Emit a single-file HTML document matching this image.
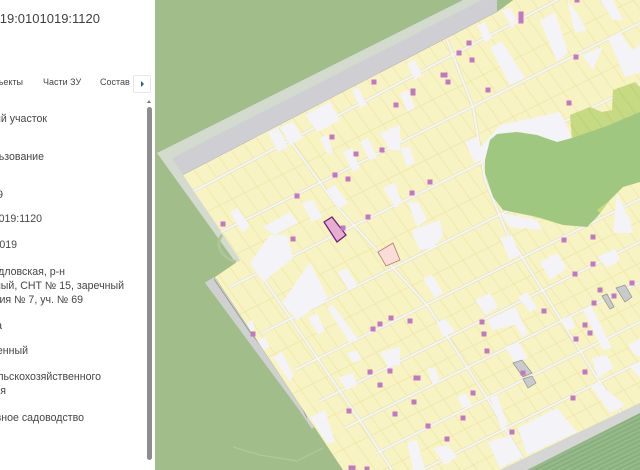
<!DOCTYPE html>
<html lang="ru"><head><meta charset="utf-8"><title>Участок</title>
<style>
html,body{margin:0;padding:0;width:640px;height:470px;overflow:hidden;background:#fff}
#map{position:absolute;left:155px;top:0;width:485px;height:470px;overflow:hidden}
#map svg{display:block;filter:blur(.35px)}
#panel{position:absolute;left:0;top:0;width:155px;height:470px;background:#fff;overflow:hidden;font-family:"Liberation Sans",sans-serif;color:#454545;font-size:10.6px}
#panel span{position:absolute;white-space:nowrap;line-height:14px}
#sb{position:absolute;left:147px;top:107px;width:5px;height:353px;border-radius:3px;background:#8d8d8d}
#up{position:absolute;left:147px;top:100px;width:0;height:0;border-left:2.5px solid transparent;border-right:2.5px solid transparent;border-bottom:3px solid #777}
#btn{position:absolute;left:133px;top:75px;width:18px;height:18px;box-sizing:border-box;border:1px solid #e4e8ee;border-radius:2px;background:#fff}
#btn:after{content:"";position:absolute;left:7px;top:5px;border-left:3px solid #2d5a86;border-top:3px solid transparent;border-bottom:3px solid transparent}
</style></head><body>
<div id="map">
<svg width="485" height="470" viewBox="155 0 485 470" xmlns="http://www.w3.org/2000/svg">
<defs>
<pattern id="pl" width="14" height="100" patternUnits="userSpaceOnUse" patternTransform="matrix(.895 -.446 .58 .81 4 0)"><rect width="14" height="100" fill="#f8f3c3"/><rect width=".9" height="100" fill="#efe8ab"/></pattern>
<pattern id="lg" width="12" height="100" patternUnits="userSpaceOnUse" patternTransform="matrix(.895 -.446 .58 .81 0 0)"><rect width="12" height="100" fill="#c6da84"/><rect width="1" height="100" fill="#b9d178"/></pattern>
<pattern id="st" width="4" height="4" patternUnits="userSpaceOnUse" patternTransform="rotate(-26)"><rect width="4" height="4" fill="#95b988"/><rect width="4" height="1.5" fill="#86ae7c"/></pattern>
<clipPath id="yc"><path d="M183 175L497 12L520 -5H640V403L500 470H343L215 277L240 260Z"/></clipPath>
</defs>
<rect x="155" y="0" width="485" height="470" fill="#a1bd8a"/>
<path d="M157 153L463 0H497V12L183 175L242 258L236 263Z" fill="#d3dace"/>
<path d="M172 158L490 -4L497 0V12L183 175Z" fill="#cfcfd3"/>
<path d="M183 175L497 12" stroke="#9c9c9c" stroke-width=".6" fill="none"/>
<path d="M207 283L214 279L313 428L307 418Z" fill="#cfd1d0" stroke="#cfd1d0" stroke-width="3"/>
<path d="M214 279L250 332L290 382L307 418" stroke="#8e8e8e" stroke-width=".7" fill="none"/>
<path d="M527 470L640 413V470Z" fill="url(#st)"/>
<path d="M500 470L640 403V413L527 470Z" fill="#d5d6d4"/>
<path d="M233 447L260 455L297 461L323 448" stroke="#b2c9a0" stroke-width="1.2" fill="none"/>
<path d="M222 235C214 245 222 258 236 262" stroke="#adc597" stroke-width="3" fill="none"/>
<path d="M183 175L497 12L520 -5H640V403L500 470H343L215 277L240 260Z" fill="url(#pl)"/>

<g clip-path="url(#yc)">
<g fill="none" stroke="#efe8ab" stroke-width=".9">
<path d="M150 240L640 -3M150 297L640 54M150 359L640 115M150 416L640 172M150 465L640 221M150 506L640 263M150 545L640 302M150 586L640 342M150 626L640 382"/>
</g>
<g fill="none" stroke="#dedcc4" stroke-width="3.2">
<path d="M190 193L563 -3M205 240L640 23M230 287L640 84M262 333L640 145M295 370L640 199M320 401L640 242M345 428L640 282M375 454L640 322M410 476L640 362"/>
<path d="M280 127L340 210L427 305L487 398L507 432L530 470M447 40L473 107L485 180L507 233L597 378L640 440M263 278L363 425L392 470"/>
</g>
<g fill="none" stroke="#f6f5ee" stroke-width="2.2">
<path d="M190 193L563 -3M205 240L640 23M230 287L640 84M262 333L640 145M295 370L640 199M320 401L640 242M345 428L640 282M375 454L640 322M410 476L640 362"/>
<path d="M280 127L340 210L427 305L487 398L507 432L530 470M447 40L473 107L485 180L507 233L597 378L640 440M263 278L363 425L392 470"/>
</g>

<g fill="#f4f3f7">
<path d="M305 115L330 102L340 120L318 132ZM280 127L293 122L303 138L290 145ZM268 132L278 128L288 147L278 152ZM352 90L358 87L367 105L360 108ZM380 133L400 125V150H390ZM320 138L327 135L333 152L328 155ZM343 152L352 148L360 168L353 172ZM360 142L368 138L377 157L370 160ZM327 190L335 185L348 203L340 208ZM383 188L393 183L400 203L395 207ZM302 203L313 200L322 217L312 222ZM230 212L238 208L250 227L242 232ZM263 227L290 212L298 223L275 235Z"/>
<path d="M250 263L270 235H287L293 258L263 282ZM282 303L310 262L328 298L297 320ZM338 272L347 268L357 285L348 290ZM308 318L317 313L325 330L318 335ZM327 308L333 305L357 338L350 343ZM247 323L252 320L255 328L250 332ZM257 340L265 337L270 347L263 350ZM273 357L282 352L293 375L290 382ZM310 417L325 410L335 442L327 443ZM338 378L353 373L357 385L347 390ZM347 353L357 350L362 360L353 363ZM380 352L400 347V365L388 367Z"/>
<path d="M412 235H443L433 248L420 250ZM423 278L432 275L443 293L435 298ZM475 300L490 293L498 307L485 315ZM487 320L515 307L528 333L523 337L515 325L493 330ZM540 262L557 253L567 268L550 280ZM500 238L512 235L520 255L510 260ZM598 257L615 249L620 260L607 268ZM505 347L518 342L528 358L515 363ZM518 297L527 292L537 308L530 312ZM437 323L445 318L455 332L443 337ZM427 368L435 367L440 382L433 385ZM457 397L465 393L472 405L463 408ZM490 398L497 395L508 425L502 430ZM518 428L557 408L577 432L527 455ZM488 442L510 435L522 457L500 468ZM433 448L448 445L457 457L445 465ZM407 442L417 440L425 470H413ZM592 358L607 355L613 368L598 378ZM590 385L598 383L625 405L610 413ZM583 310L592 307L612 348L603 350ZM562 318L572 317L575 328L567 330ZM628 345L640 338V357L635 355ZM630 367L640 363V378ZM390 348L398 355L400 363L390 367Z"/>
<path d="M490 47L502 42L525 78L510 85ZM540 20L555 12L568 52L557 62ZM502 10L510 8L518 22L512 28ZM582 55L603 47L593 70ZM608 38L620 33L632 50L640 45V73L625 77ZM390 127L402 140L390 150ZM400 93L408 90L415 108L407 112ZM407 63L415 60L422 75L415 80ZM477 25L485 22L492 38L485 42ZM400 148L410 147L415 163L407 167ZM465 142L477 137L482 160L475 163ZM390 187L395 183L402 203L395 208ZM408 203L418 202L427 220L417 227ZM413 230L440 220L443 235H413ZM617 193L630 220L633 233L613 233ZM567 0L577 13L587 30L575 33ZM600 0H613L623 20L613 20ZM500 213L537 220L543 230L510 227Z"/>
<path d="M478 150L500 125L560 112L572 138L557 142L485 165Z"/>
</g>
</g>

<path d="M570 115L590 107L602 112L612 110L613 90L635 82L640 87V125L572 140Z" fill="url(#lg)"/>
<path d="M485 160L490 140L497 134L517 132L537 135L557 142L572 138L607 126L640 112V182L623 187L610 200L597 217L587 227L563 225L537 217L503 210L493 197L485 173Z" fill="#a0c77f"/>
<path d="M597 210L610 200L600 213ZM530 215L543 219L538 218Z" fill="#c6da84"/>

<g fill="#c9cacb" stroke="#8f9490" stroke-width=".7">
<path d="M513 363L522 360L532 373L523 377ZM523 379L532 376L536 383L528 388ZM602 296L607 294L614 307L610 309ZM616 288L625 285L632 297L625 302Z"/>
</g>
<path d="M324 222L332 217L346 235L337 242Z" fill="#e8aed2" stroke="#6f2278" stroke-width="1.3"/>
<path d="M378 252L393 243L400 260L386 266Z" fill="#fbdcd6" stroke="#b07a78" stroke-width=".8"/>

<path stroke-linecap="square" fill="none" stroke="#c078c2" stroke-width="5" d="M374 82h.01M396 105h.01M332 137h.01M382 150h.01M356 154h.01M335 175h.01M348 179h.01M297 196h.01M368 217h.01M223 224h.01M343 228h.01M521 14v7M469 43h.01M459 53h.01M472 60h.01M576 57h.01M443 75h2M448 82h.01M413 91v2M488 90h.01M569 103h.01M430 182h.01M412 193h.01M577 0h.01M293 239h.01M253 334h.01M373 329h.01M380 324h.01M391 318h.01M370 372h.01M390 371h.01M380 385h.01M349 411h.01M395 414h.01M351 468h2M367 469h.01M564 240h.01M593 237h.01M593 264h.01M575 274h.01M632 283h.01M600 290h.01M614 296h.01M594 303h.01M544 311h.01M410 321h.01M482 322h.01M484 334h.01M585 325h.01M590 333h.01M576 339h.01M487 351h.01M523 373h.01M585 372h.01M416 378h2M473 393h.01M414 402h.01M573 398h.01M463 418h.01M428 426h.01M447 439h.01M512 432h.01"/>
</svg>
</div>

<div id="panel">
<span style="right:55px;top:10px;font-size:13px;line-height:17px;color:#3f3f3f">:19:0101019:1120</span>
<span style="right:132px;top:75px;font-size:9px">Объекты</span>
<span style="left:43px;top:75px;font-size:9px">Части ЗУ</span>
<span style="left:100px;top:75px;font-size:9px">Состав</span>
<div id="btn"></div>
<div id="up"></div>
<div id="sb"></div>
<span style="right:108px;top:112px">Земельный участок</span>
<span style="right:111px;top:150px">Использование</span>
<span style="right:152px;top:188px">2019</span>
<span style="right:113px;top:212px">0101019:1120</span>
<span style="right:138px;top:238px">0101019</span>
<span style="right:90px;top:265px">Свердловская, р-н</span>
<span style="right:31px;top:279px">Заречный, СНТ № 15, заречный</span>
<span style="right:72px;top:293px">Линия № 7, уч. № 69</span>
<span style="right:153px;top:319px">Да</span>
<span style="right:127px;top:344px">Уточненный</span>
<span style="right:54px;top:370px">Земли сельскохозяйственного</span>
<span style="right:149px;top:384px">назначения</span>
<span style="right:71px;top:411px">Коллективное садоводство</span>
</div>
</body></html>
